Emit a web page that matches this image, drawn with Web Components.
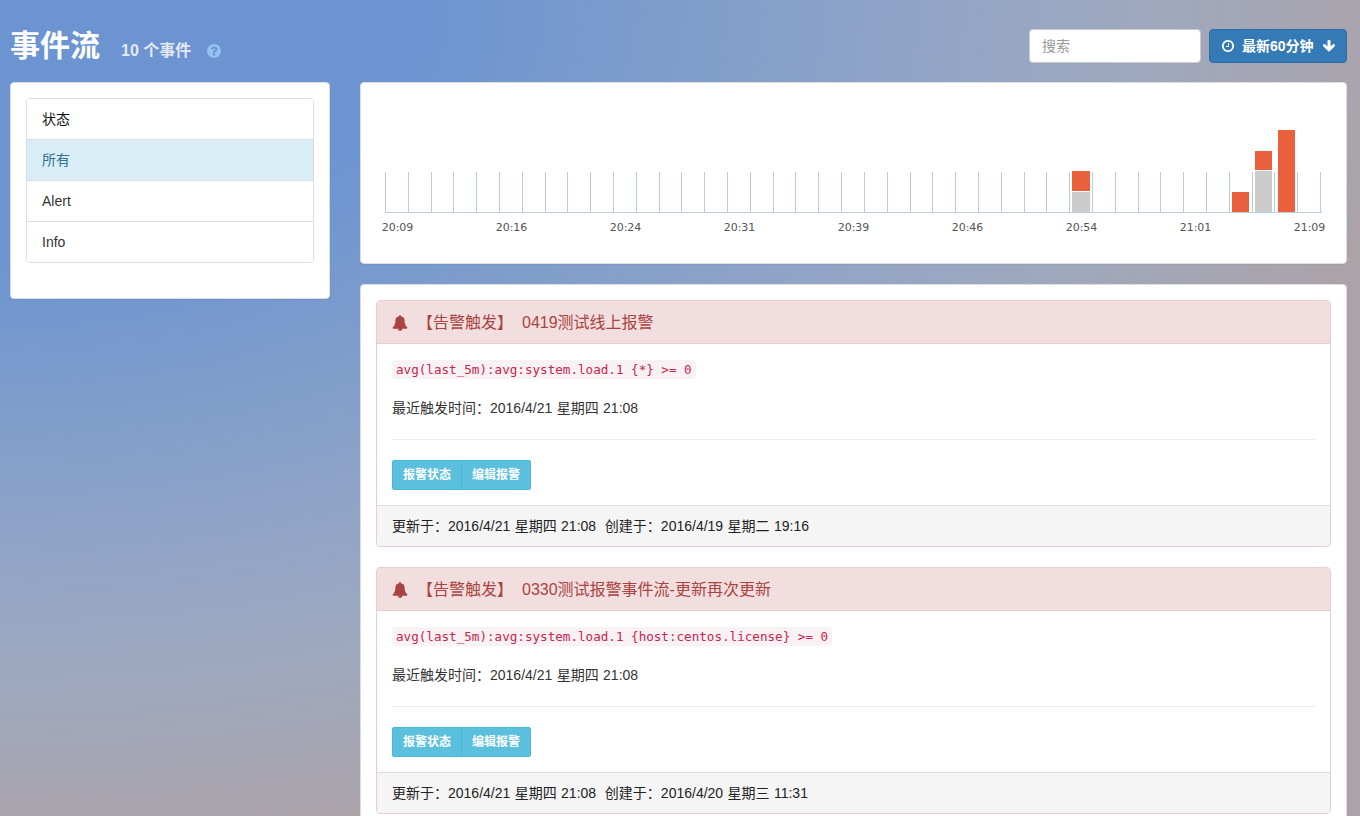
<!DOCTYPE html>
<html lang="zh">
<head>
<meta charset="utf-8">
<title>事件流</title>
<style>
  html { overflow: hidden; height: 100%; }
  body {
    margin: 0;
    min-height: 100%;
    font: 14px/20px "Liberation Sans", "Noto Sans CJK SC", sans-serif;
    color: #333;
    background: radial-gradient(ellipse 1360px 816px at 0 0, #6b94d1 0%, #6b94d1 30%, #92a5c6 69%, #9fa8bd 85%, #aca3a9 104%) fixed;
  }
</style>
</head>
<body>
<ev-page>
  <ev-header slot="header" title-text="事件流" count="10 个事件" range="最新60分钟"></ev-header>
  <ev-panel slot="side" class="side">
    <ev-list>
      <ev-item>状态</ev-item>
      <ev-item active>所有</ev-item>
      <ev-item>Alert</ev-item>
      <ev-item>Info</ev-item>
    </ev-list>
  </ev-panel>
  <ev-panel slot="main"><ev-chart></ev-chart></ev-panel>
  <ev-panel slot="main">
    <ev-card title-text="0419测试线上报警" query="avg(last_5m):avg:system.load.1 {*} >= 0" last="2016/4/21 星期四 21:08" updated="2016/4/21 星期四 21:08" created="2016/4/19 星期二 19:16"></ev-card>
    <ev-card title-text="0330测试报警事件流-更新再次更新" query="avg(last_5m):avg:system.load.1 {host:centos.license} >= 0" last="2016/4/21 星期四 21:08" updated="2016/4/21 星期四 21:08" created="2016/4/20 星期三 11:31"></ev-card>
  </ev-panel>
</ev-page>

<script>
const ICONS = {
  bell: 'M912 1696q0-16-16-16-59 0-101.5-42.5t-42.5-101.5q0-16-16-16t-16 16q0 73 51.5 124.5t124.5 51.5q16 0 16-16zm816-288q0 52-38 90t-90 38h-448q0 106-75 181t-181 75-181-75-75-181h-448q-52 0-90-38t-38-90q50-42 91-88t85-119.5 74.5-158.5 50-206 19.5-260q0-152 117-282.5t307-158.5q-8-19-8-39 0-40 28-68t68-28 68 28 28 68q0 20-8 39 190 28 307 158.5t117 282.5q0 139 19.5 260t50 206 74.5 158.5 85 119.5 91 88z',
  help: 'M1024 1376v-192q0-14-9-23t-23-9h-192q-14 0-23 9t-9 23v192q0 14 9 23t23 9h192q14 0 23-9t9-23zm256-672q0-88-55.5-163t-138.5-116-170-41q-243 0-371 213-15 24 8 42l132 100q7 6 19 6 16 0 25-12 53-68 86-92 34-24 86-24 48 0 85.5 26t37.5 59q0 38-20 61t-68 45q-63 28-115.5 86.5t-52.5 125.5v36q0 14 9 23t23 9h192q14 0 23-9t9-23q0-19 21.5-49.5t54.5-49.5q32-18 49-28.5t46-35 44.5-48 28-60.5 12.5-81zm384 192q0 209-103 385.5t-279.5 279.5-385.5 103-385.5-103-279.5-279.5-103-385.5 103-385.5 279.5-279.5 385.5-103 385.5 103 279.5 279.5 103 385.5z',
  clock: 'M1024 544v448q0 14-9 23t-23 9h-320q-14 0-23-9t-9-23v-64q0-14 9-23t23-9h224v-352q0-14 9-23t23-9h64q14 0 23 9t9 23zm416 352q0-148-73-273t-198-198-273-73-273 73-198 198-73 273 73 273 198 198 273 73 273-73 198-198 73-273zm224 0q0 209-103 385.5t-279.5 279.5-385.5 103-385.5-103-279.5-279.5-103-385.5 103-385.5 279.5-279.5 385.5-103 385.5 103 279.5 279.5 103 385.5z',
  down: 'M1675 832q0 53-37 90l-651 652q-39 37-91 37-53 0-90-37l-651-652q-38-36-38-90 0-53 38-91l74-75q39-37 91-37 53 0 90 37l294 294v-704q0-52 38-90t90-38h128q52 0 90 38t38 90v704l294-294q37-37 90-37 52 0 91 37l75 75q37 39 37 91z'
};

function icon(name, size, color) {
  return `<svg width="${size}" height="${size}" viewBox="0 0 1792 1792" fill="${color}" style="display:block;flex:none"><path d="${ICONS[name]}"/></svg>`;
}

class EvPage extends HTMLElement {
  constructor() {
    super();
    this.attachShadow({ mode: 'open' });
    this.shadowRoot.innerHTML = `
      <style>
        :host { display: block; padding: 29px 13px 0 10px; }
        .cols { display: grid; grid-template-columns: 320px 1fr; gap: 30px; margin-top: 19px; align-items: start; }
        .main { display: flex; flex-direction: column; gap: 20px; min-width: 0; }
      </style>
      <slot name="header"></slot>
      <div class="cols">
        <div><slot name="side"></slot></div>
        <div class="main"><slot name="main"></slot></div>
      </div>
    `;
  }
}

class EvHeader extends HTMLElement {
  constructor() {
    super();
    this.attachShadow({ mode: 'open' });
  }
  connectedCallback() {
    this.shadowRoot.innerHTML = `
      <style>
        :host { display: flex; align-items: center; height: 34px; }
        h1 { margin: 0; font-size: 30px; line-height: 34px; font-weight: bold; color: #fff; }
        .count { margin-left: 21px; font-size: 16px; font-weight: bold; color: #e3e9f3; position: relative; top: 5px; }
        .help { margin-left: 15px; position: relative; top: 5px; }
        .tools { margin-left: auto; display: flex; gap: 8px; }
        input {
          box-sizing: border-box; width: 172px; height: 34px; padding: 6px 12px;
          border: 1px solid #ccc; border-radius: 4px; background: #fff;
          font: inherit; color: #555; outline: none;
        }
        input::placeholder { color: #999; opacity: 1; }
        button {
          box-sizing: border-box; display: flex; align-items: center; width: 138px; height: 34px;
          padding: 0 11px; border: 1px solid #2e6da4; border-radius: 4px; background: #337ab7;
          font: bold 14px/20px "Liberation Sans", "Noto Sans CJK SC", sans-serif; color: #fff; white-space: nowrap;
        }
        button span { margin: 0 8px 0 7px; }
      </style>
      <h1>${this.getAttribute('title-text')}</h1>
      <span class="count">${this.getAttribute('count')}</span>
      <span class="help">${icon('help', 16, '#92c3f3')}</span>
      <div class="tools">
        <input placeholder="搜索">
        <button>${icon('clock', 14, '#fff')}<span>${this.getAttribute('range')}</span>${icon('down', 14, '#fff')}</button>
      </div>
    `;
  }
}

class EvPanel extends HTMLElement {
  constructor() {
    super();
    this.attachShadow({ mode: 'open' });
    this.shadowRoot.innerHTML = `
      <style>
        :host {
          display: flex; flex-direction: column; gap: 20px; box-sizing: border-box; padding: 15px;
          background: #fff; border: 1px solid #ddd; border-radius: 4px;
          box-shadow: 0 1px 1px rgba(0,0,0,.05);
        }
        :host(.side) { padding-bottom: 35px; }
      </style>
      <slot></slot>
    `;
  }
}

class EvList extends HTMLElement {
  constructor() {
    super();
    this.attachShadow({ mode: 'open' });
    this.shadowRoot.innerHTML = `
      <style>
        :host { display: flex; flex-direction: column; border: 1px solid #ddd; border-radius: 4px; overflow: hidden; }
      </style>
      <slot></slot>
    `;
  }
}

class EvItem extends HTMLElement {
  constructor() {
    super();
    this.attachShadow({ mode: 'open' });
    this.shadowRoot.innerHTML = `
      <style>
        :host { display: block; padding: 10px 15px; color: #333; background: #fff; border-top: 1px solid #ddd; }
        :host(:first-child) { border-top: 0; color: #111; }
        :host([active]) { background: #d9edf7; color: #31708f; }
      </style>
      <slot></slot>
    `;
  }
}

class EvChart extends HTMLElement {
  constructor() {
    super();
    this.attachShadow({ mode: 'open' });
  }
  connectedCallback() {
    const left = 24.5, step = 22.805, base = 114;
    let ticks = '';
    for (let i = 0; i < 42; i++) {
      const x = Math.round(left + i * step - 0.5) + 0.5;
      ticks += `<line x1="${x}" x2="${x}" y1="74" y2="${base}"/>`;
    }
    // x, y, height
    const red = [[711, 73, 20], [871, 94, 20], [894, 53, 19], [917, 32, 82]];
    const grey = [[711, 94, 20], [894, 73, 41]];
    const rects = (list, fill) => list.map(r => `<rect x="${r[0]}" y="${r[1]}" width="${r[0] === 711 ? 18 : 17}" height="${r[2]}" fill="${fill}"/>`).join('');
    const labels = ['20:09', '20:16', '20:24', '20:31', '20:39', '20:46', '20:54', '21:01', '21:09'];
    const text = labels.map((t, i) => `<text x="${36.5 + i * 114}" y="133" text-anchor="middle">${t}</text>`).join('');
    this.shadowRoot.innerHTML = `
      <style>
        :host { display: block; height: 150px; }
        svg { display: block; margin-left: -15px; }
        line { stroke: #b9cde0; stroke-width: 1; }
        text { font: 11px "DejaVu Sans", sans-serif; fill: #545454; }
      </style>
      <svg width="985" height="150" viewBox="0 0 985 150">
        ${ticks}
        <line x1="24" x2="961" y1="${base + 0.5}" y2="${base + 0.5}"/>
        ${rects(red, '#e8603c')}
        ${rects(grey, '#cccccc')}
        ${text}
      </svg>
    `;
  }
}

class EvCard extends HTMLElement {
  constructor() {
    super();
    this.attachShadow({ mode: 'open' });
  }
  connectedCallback() {
    const esc = s => s.replace(/&/g, '&amp;').replace(/>/g, '&gt;').replace(/</g, '&lt;');
    this.shadowRoot.innerHTML = `
      <style>
        :host { display: block; border: 1px solid #ebccd1; border-radius: 4px; overflow: hidden; }
        .head {
          display: flex; align-items: center; height: 43px; padding: 0 15px; box-sizing: border-box;
          background: #f2dede; border-bottom: 1px solid #ebccd1; color: #a94442; font-size: 16px;
        }
        .head svg { position: relative; top: 1px; }
        .head b, .head span { margin-left: 9px; font-weight: normal; position: relative; top: 1px; }
        .body { padding: 15px; word-spacing: .5px; }
        code {
          display: inline-block; padding: 0 4px; height: 19px; margin: 1px 0 0; word-spacing: 0;
          font: 12.6px/19px "DejaVu Sans Mono", monospace; color: #c7254e; background: #f9f2f4; border-radius: 4px;
        }
        .last { margin: 19px 0 0; }
        hr { margin: 21px 0 20px; border: 0; border-top: 1px solid #eee; }
        .btns { display: flex; width: max-content; border-radius: 3px; overflow: hidden; word-spacing: 0; }
        .btns a {
          display: block; height: 30px; box-sizing: border-box; padding: 0 10px; font-size: 12px; line-height: 28px; font-weight: bold;
          color: #fff; background: #5bc0de; border: 1px solid #46b8da;
        }
        .btns a + a { margin-left: -1px; }
        .foot { height: 41px; box-sizing: border-box; padding: 10px 15px; background: #f5f5f5; border-top: 1px solid #ddd; color: #222; word-spacing: .5px; }
      </style>
      <div class="head">${icon('bell', 16, '#a94442')}<b>【告警触发】</b><span>${this.getAttribute('title-text')}</span></div>
      <div class="body">
        <code>${esc(this.getAttribute('query'))}</code>
        <p class="last">最近触发时间：${this.getAttribute('last')}</p>
        <hr>
        <div class="btns"><a>报警状态</a><a>编辑报警</a></div>
      </div>
      <div class="foot">更新于：${this.getAttribute('updated')}&nbsp;&nbsp;创建于：${this.getAttribute('created')}</div>
    `;
  }
}

customElements.define('ev-page', EvPage);
customElements.define('ev-header', EvHeader);
customElements.define('ev-panel', EvPanel);
customElements.define('ev-list', EvList);
customElements.define('ev-item', EvItem);
customElements.define('ev-chart', EvChart);
customElements.define('ev-card', EvCard);
</script>
</body>
</html>
